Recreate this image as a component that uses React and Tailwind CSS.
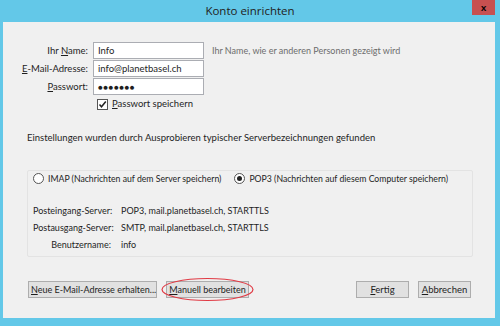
const FONT = { fontFamily: 'Lato, "Open Sans", sans-serif' }

function Field({ label, accessKey, value, password }) {
  const i = label.indexOf(accessKey)
  return (
    <>
      <label className="text-right leading-[17px]">
        {label.slice(0, i)}
        <span className="underline">{accessKey}</span>
        {label.slice(i + 1)}
      </label>
      <div className="h-[17px] border border-[#abadb3] bg-white px-[4px] leading-[15px]">
        {password ? <span className="text-[8px] tracking-[0.5px]">●●●●●●●</span> : value}
      </div>
    </>
  )
}

function Radio({ checked, children }) {
  return (
    <div className="flex items-center gap-[4px]">
      <span className="flex h-[11px] w-[11px] items-center justify-center rounded-full border border-[#555] bg-white">
        {checked && <span className="h-[5px] w-[5px] rounded-full bg-[#222]" />}
      </span>
      <span>{children}</span>
    </div>
  )
}

function Button({ className = "", children }) {
  return (
    <button className={"h-[17px] border border-[#adadad] bg-[#e1e1e1] px-[2px] leading-[15px] text-[#1e1e1e] " + className}>
      {children}
    </button>
  )
}

export default function App() {
  return (
    <div
      className="flex h-[326px] w-[500px] flex-col whitespace-nowrap bg-[#63c8e8] text-[9.5px] text-[#1e1e1e]"
      style={FONT}
    >
      <div className="relative flex h-[22px] items-center justify-center">
        <span className="text-[11.5px] text-[#222]" style={{ fontFamily: '"Open Sans", sans-serif' }}>
          Konto einrichten
        </span>
        <div className="absolute right-[5px] top-0 flex h-[15px] w-[23px] items-center justify-center bg-[#c75050] text-[10px] font-bold text-black">
          x
        </div>
      </div>
      <div className="ml-[3px] mr-[5px] flex h-[296px] flex-col bg-[#f0f0f0]">
        <div className="mt-[20px] grid grid-cols-[85px_111px_1fr] gap-x-[5px] gap-y-[1px]">
          <Field label="Ihr Name:" accessKey="N" value="Info" />
          <span className="ml-[3px] text-[9px] leading-[17px] text-[#6d6d6d]">
            Ihr Name, wie er anderen Personen gezeigt wird
          </span>
          <Field label="E-Mail-Adresse:" accessKey="E" value="info@planetbasel.ch" />
          <span />
          <Field label="Passwort:" accessKey="P" value="" password />
          <span />
        </div>
        <div className="mt-[2px] ml-[94px] flex items-center gap-[4px]">
          <span className="flex h-[11px] w-[11px] items-center justify-center border border-[#555] bg-white">
            <svg width="9" height="9" viewBox="0 0 9 9">
              <path d="M1.5 4.5 L3.5 6.8 L7.8 1.6" fill="none" stroke="#222" strokeWidth="1.5" />
            </svg>
          </span>
          <span>
            <span className="underline">P</span>asswort speichern
          </span>
        </div>
        <div className="mt-[20px] ml-[24px] leading-[14px]">
          Einstellungen wurden durch Ausprobieren typischer Serverbezeichnungen gefunden
        </div>
        <div className="mt-[25px] ml-[24px] h-[87px] w-[446px] rounded-[2px] border border-[#e3e3e3] px-[5px]">
          <div className="flex h-[14px] items-center gap-[13px] text-[8.7px]">
            <Radio>IMAP (Nachrichten auf dem Server speichern)</Radio>
            <Radio checked>POP3 (Nachrichten auf diesem Computer speichern)</Radio>
          </div>
          <div className="mt-[18px] grid grid-cols-[78px_1fr] gap-x-[10px] gap-y-[1px] text-[9px] leading-[16px]">
            <span className="text-right">Posteingang-Server:</span>
            <span>POP3, mail.planetbasel.ch, STARTTLS</span>
            <span className="text-right">Postausgang-Server:</span>
            <span>SMTP, mail.planetbasel.ch, STARTTLS</span>
            <span className="text-right">Benutzername:</span>
            <span>info</span>
          </div>
        </div>
        <div className="mt-[24px] ml-[25px] mr-[24px] flex items-center">
          <Button className="w-[129px] text-[9px]">
            <span className="underline">N</span>eue E-Mail-Adresse erhalten...
          </Button>
          <div className="relative ml-[9px]">
            <Button className="w-[83px] text-[9px]">
              <span className="underline">M</span>anuell bearbeiten
            </Button>
            <svg className="absolute left-[-6px] top-[-4px]" width="95" height="25" viewBox="0 0 95 25">
              <ellipse cx="47.5" cy="12.5" rx="45.5" ry="11" fill="none" stroke="#e03a44" strokeWidth="1.2" />
            </svg>
          </div>
          <div className="flex-1" />
          <Button className="w-[53px]">
            <span className="underline">F</span>ertig
          </Button>
          <Button className="ml-[9px] w-[53px]">
            <span className="underline">A</span>bbrechen
          </Button>
        </div>
      </div>
    </div>
  )
}
